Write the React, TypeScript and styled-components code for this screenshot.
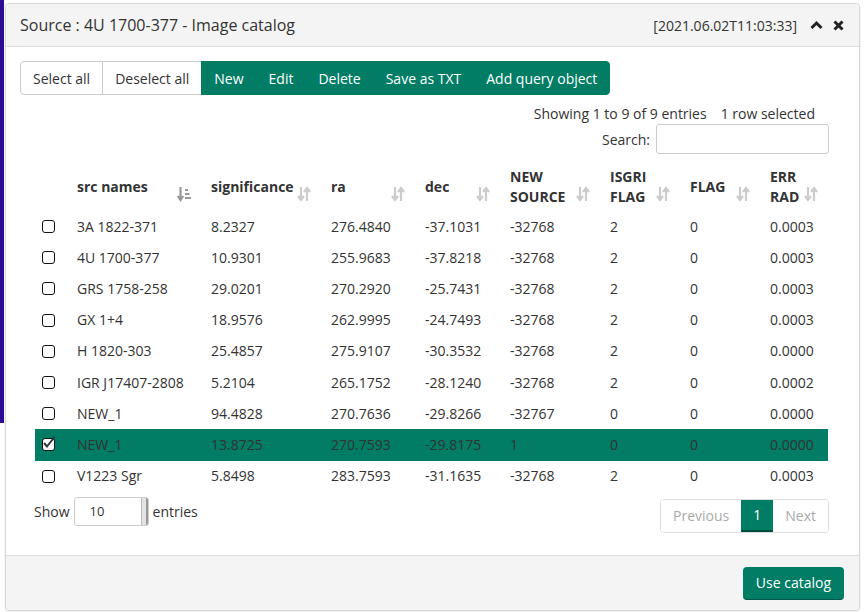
import React from 'react';
import styled, { createGlobalStyle } from 'styled-components';

const GREEN = '#017c65';

const GlobalStyle = createGlobalStyle`
  html, body {
    margin: 0;
    padding: 0;
    background: #fff;
    font-family: "Open Sans", "Liberation Sans", sans-serif;
    font-size: 14px;
    color: #333;
  }
  * { box-sizing: border-box; }
`;

const Desktop = styled.div`
  position: relative;
  width: 868px;
  height: 612px;
  overflow: hidden;
  padding: 3px 0 0 5px;
`;

const PurpleStrip = styled.div`
  position: absolute;
  left: 0;
  top: 0;
  width: 4px;
  height: 423px;
  background: #2c0b96;
`;

const Dialog = styled.div`
  position: relative;
  width: 855px;
  height: 608px;
  border: 1px solid #d6d6d6;
  border-radius: 4px;
  background: #fff;
  display: flex;
  flex-direction: column;
  box-shadow: 0 1px 3px rgba(0, 0, 0, 0.08);
`;

const Header = styled.div`
  height: 43px;
  background: #f4f4f4;
  border-bottom: 1px solid #dedede;
  display: flex;
  align-items: center;
  justify-content: space-between;
  padding: 0 15px 0 14px;
  border-radius: 4px 4px 0 0;
`;

const Title = styled.div`
  font-size: 16px;
  color: #333;
`;

const HeaderRight = styled.div`
  display: flex;
  align-items: center;
  font-size: 14px;
  color: #333;
`;

const IconButton = styled.span<{ $gap: number }>`
  display: inline-flex;
  align-items: center;
  margin-left: ${p => p.$gap}px;
`;

const Body = styled.div`
  flex: 1;
  padding: 15px 14px 0 14px;
`;

const ButtonGroup = styled.div`
  display: flex;
  height: 34px;
  margin-top: -1px;
`;

const GroupButton = styled.div<{ $primary?: boolean; $first?: boolean; $last?: boolean }>`
  display: flex;
  align-items: center;
  padding: 0 12px;
  font-size: 14px;
  background: ${p => (p.$primary ? GREEN : '#fff')};
  color: ${p => (p.$primary ? '#fff' : '#333')};
  border: 1px solid ${p => (p.$primary ? GREEN : '#ccc')};
  margin-left: ${p => (p.$first ? 0 : -1)}px;
  border-radius: ${p => (p.$first ? '4px 0 0 4px' : p.$last ? '0 4px 4px 0' : '0')};
`;

const TableArea = styled.div`
  padding: 0 16px 0 15px;
`;

const InfoLine = styled.div`
  display: flex;
  justify-content: flex-end;
  gap: 14px;
  margin-top: 9px;
  padding-right: 14px;
  line-height: 20px;
`;

const SearchLine = styled.div`
  display: flex;
  justify-content: flex-end;
  align-items: center;
  gap: 6px;
`;

const SearchInput = styled.div`
  width: 173px;
  height: 30px;
  border: 1px solid #ccc;
  border-radius: 3px;
`;

const Table = styled.table`
  width: 793px;
  border-collapse: collapse;
  margin-top: 9px;
  table-layout: fixed;
`;

const Th = styled.th<{ $w: number }>`
  position: relative;
  width: ${p => p.$w}px;
  text-align: left;
  font-weight: 700;
  padding: 0 10px;
  height: 48px;
  line-height: 20px;
  vertical-align: middle;
`;

const SortIcon = styled.span`
  position: absolute;
  right: 10px;
  bottom: 9px;
  display: flex;
`;

const Tr = styled.tr<{ $selected?: boolean }>`
  background: ${p => (p.$selected ? GREEN : 'transparent')};
`;

const Td = styled.td`
  padding: 0 10px;
  height: 31.2px;
  line-height: 20px;
  white-space: nowrap;
`;

const CheckCell = styled.td`
  padding: 0 0 0 7px;
  height: 31.2px;
`;

const Checkbox = styled.span`
  position: relative;
  display: block;
  width: 13px;
  height: 13px;
  border: 1.5px solid #111;
  border-radius: 3px;
  background: #fff;
`;

const CheckMark = styled.svg`
  position: absolute;
  left: -1px;
  top: -4px;
`;

const Bottom = styled.div`
  display: flex;
  justify-content: space-between;
  align-items: flex-start;
  margin-top: 5px;
`;

const LengthControl = styled.div`
  display: flex;
  align-items: center;
  gap: 4px;
  margin-left: -1px;
`;

const FakeSelect = styled.div`
  width: 75px;
  height: 29px;
  border: 1px solid #ccc;
  border-radius: 3px;
  display: flex;
  align-items: center;
  justify-content: space-between;
  padding-left: 15px;
  font-size: 13px;
  overflow: hidden;
`;

const SelectBar = styled.div`
  width: 7px;
  height: 100%;
  background: #e3e3e3;
  border-left: 1px solid #bbb;
  border-right: 2px solid #999;
`;

const Pagination = styled.div`
  display: flex;
  height: 34px;
  margin-top: 2px;
  border: 1px solid #ddd;
  border-radius: 4px;
  overflow: hidden;
`;

const PageItem = styled.div<{ $active?: boolean }>`
  display: flex;
  align-items: center;
  padding: 0 12px;
  color: ${p => (p.$active ? '#fff' : '#aaa')};
  background: ${p => (p.$active ? GREEN : '#fff')};
  border-bottom: ${p => (p.$active ? '2px solid #014e40' : 'none')};
`;

const Footer = styled.div`
  height: 55px;
  background: #f4f4f4;
  border-top: 1px solid #dedede;
  display: flex;
  justify-content: flex-end;
  align-items: center;
  padding: 0 15px;
  border-radius: 0 0 4px 4px;
`;

const PrimaryButton = styled.div`
  background: ${GREEN};
  color: #fff;
  font-size: 14px;
  height: 33px;
  padding: 0 13px;
  display: flex;
  align-items: center;
  border-radius: 4px;
  border-bottom: 1px solid #01594a;
`;

const SortBoth = () => (
  <svg width="14" height="16" viewBox="0 0 14 16">
    <path d="M4 1v12M1 10l3 4 3-4" stroke="#ccc" strokeWidth="2.2" fill="none" />
    <path d="M10 15V3M7 6l3-4 3 4" stroke="#ccc" strokeWidth="2.2" fill="none" />
  </svg>
);

const SortAmount = () => (
  <svg width="14" height="16" viewBox="0 0 14 16">
    <path d="M3.5 1v12M0.8 10l2.7 4 2.7-4" stroke="#999" strokeWidth="2.2" fill="none" />
    <rect x="8" y="3" width="3" height="2" fill="#999" />
    <rect x="8" y="7" width="4.5" height="2" fill="#999" />
    <rect x="8" y="11" width="6" height="2" fill="#999" />
  </svg>
);

const columns: { label: React.ReactNode; w: number; sorted?: boolean }[] = [
  { label: 'src names', w: 134, sorted: true },
  { label: 'significance', w: 120 },
  { label: 'ra', w: 94 },
  { label: 'dec', w: 85 },
  { label: <>NEW<br />SOURCE</>, w: 100 },
  { label: <>ISGRI<br />FLAG</>, w: 80 },
  { label: 'FLAG', w: 80 },
  { label: <>ERR<br />RAD</>, w: 68 },
];

const rows = [
  ['3A 1822-371', '8.2327', '276.4840', '-37.1031', '-32768', '2', '0', '0.0003'],
  ['4U 1700-377', '10.9301', '255.9683', '-37.8218', '-32768', '2', '0', '0.0003'],
  ['GRS 1758-258', '29.0201', '270.2920', '-25.7431', '-32768', '2', '0', '0.0003'],
  ['GX 1+4', '18.9576', '262.9995', '-24.7493', '-32768', '2', '0', '0.0003'],
  ['H 1820-303', '25.4857', '275.9107', '-30.3532', '-32768', '2', '0', '0.0000'],
  ['IGR J17407-2808', '5.2104', '265.1752', '-28.1240', '-32768', '2', '0', '0.0002'],
  ['NEW_1', '94.4828', '270.7636', '-29.8266', '-32767', '0', '0', '0.0000'],
  ['NEW_1', '13.8725', '270.7593', '-29.8175', '1', '0', '0', '0.0000'],
  ['V1223 Sgr', '5.8498', '283.7593', '-31.1635', '-32768', '2', '0', '0.0003'],
];

const SELECTED = 7;

export default function App() {
  return (
    <>
      <GlobalStyle />
      <Desktop>
        <PurpleStrip />
        <Dialog>
          <Header>
            <Title>Source : 4U 1700-377 - Image catalog</Title>
            <HeaderRight>
              <span>[2021.06.02T11:03:33]</span>
              <IconButton $gap={13}>
                <svg width="13" height="10" viewBox="0 0 13 10">
                  <path d="M1.5 8L6.5 3l5 5" stroke="#222" strokeWidth="3" fill="none" />
                </svg>
              </IconButton>
              <IconButton $gap={10}>
                <svg width="11" height="11" viewBox="0 0 11 11">
                  <path d="M1.5 1.5l8 8M9.5 1.5l-8 8" stroke="#222" strokeWidth="3" />
                </svg>
              </IconButton>
            </HeaderRight>
          </Header>
          <Body>
            <ButtonGroup>
              <GroupButton $first>Select all</GroupButton>
              <GroupButton>Deselect all</GroupButton>
              <GroupButton $primary>New</GroupButton>
              <GroupButton $primary>Edit</GroupButton>
              <GroupButton $primary>Delete</GroupButton>
              <GroupButton $primary>Save as TXT</GroupButton>
              <GroupButton $primary $last>Add query object</GroupButton>
            </ButtonGroup>
            <TableArea>
              <InfoLine>
                <span>Showing 1 to 9 of 9 entries</span>
                <span>1 row selected</span>
              </InfoLine>
              <SearchLine>
                <span>Search:</span>
                <SearchInput />
              </SearchLine>
              <Table>
                <thead>
                  <tr>
                    <Th $w={32} />
                    {columns.map((c, i) => (
                      <Th key={i} $w={c.w}>
                        {c.label}
                        <SortIcon>{c.sorted ? <SortAmount /> : <SortBoth />}</SortIcon>
                      </Th>
                    ))}
                  </tr>
                </thead>
                <tbody>
                  {rows.map((r, i) => (
                    <Tr key={i} $selected={i === SELECTED}>
                      <CheckCell>
                        <Checkbox>
                          {i === SELECTED && (
                            <CheckMark width="15" height="15" viewBox="0 0 15 15">
                              <path d="M2 8l3 3.5L12.5 2" stroke="#333" strokeWidth="2" fill="none" />
                            </CheckMark>
                          )}
                        </Checkbox>
                      </CheckCell>
                      {r.map((v, j) => (
                        <Td key={j}>{v}</Td>
                      ))}
                    </Tr>
                  ))}
                </tbody>
              </Table>
              <Bottom>
                <LengthControl>
                  <span>Show</span>
                  <FakeSelect>
                    <span>10</span>
                    <SelectBar />
                  </FakeSelect>
                  <span>entries</span>
                </LengthControl>
                <Pagination>
                  <PageItem>Previous</PageItem>
                  <PageItem $active>1</PageItem>
                  <PageItem>Next</PageItem>
                </Pagination>
              </Bottom>
            </TableArea>
          </Body>
          <Footer>
            <PrimaryButton>Use catalog</PrimaryButton>
          </Footer>
        </Dialog>
      </Desktop>
    </>
  );
}
